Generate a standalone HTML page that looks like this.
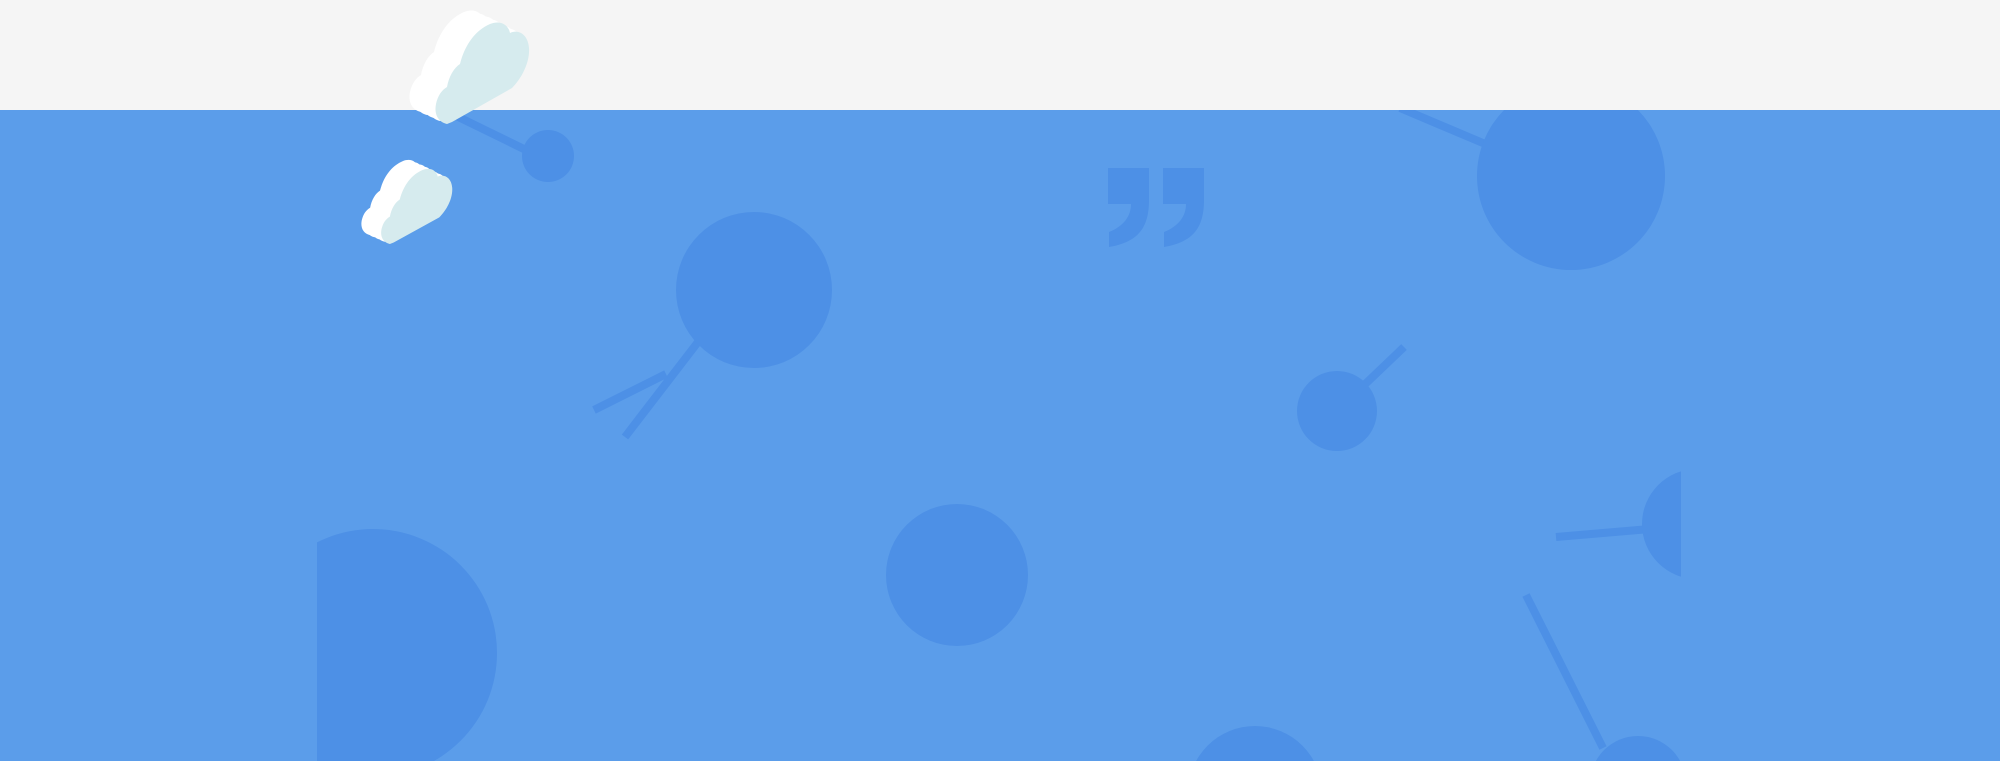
<!DOCTYPE html>
<html><head><meta charset="utf-8"><style>
html,body{margin:0;padding:0;width:2000px;height:761px;overflow:hidden;background:#5b9dea;}
svg{position:absolute;left:0;top:0;display:block}
</style></head><body><svg width="2000" height="761" viewBox="0 0 2000 761" xmlns="http://www.w3.org/2000/svg">
<defs>
<clipPath id="c"><rect x="317" y="110" width="1364" height="651"/></clipPath>
<path id="cf" d="M447,124 C438,122 434,114 436,104 C438,95 442,90 447,87 C449,76 454,68 460,64 C465,44 476,30 490,24 C500,20 508,24 510,33 C518,29 528,34 529,48 C530,62 522,78 512,88 L452,122 Z"/>
</defs>
<rect x="0" y="110" width="2000" height="651" fill="#5b9dea"/>
<g clip-path="url(#c)" fill="#4d90e6" stroke="#4d90e6">
<g fill="none" stroke-width="8">
<line x1="440" y1="108" x2="530" y2="152"/>
<line x1="698" y1="342" x2="625" y2="437"/>
<line x1="666" y1="374" x2="594" y2="410"/>
<line x1="1400" y1="108" x2="1490" y2="146"/>
<line x1="1337" y1="411" x2="1404" y2="347"/>
<line x1="1556" y1="537" x2="1650" y2="529"/>
<line x1="1526" y1="595" x2="1603" y2="748"/>
</g>
<g stroke="none">
<circle cx="548" cy="156" r="26"/>
<circle cx="754" cy="290" r="78"/>
<circle cx="373" cy="653" r="124"/>
<circle cx="957" cy="575" r="71"/>
<circle cx="1571" cy="176" r="94"/>
<circle cx="1337" cy="411" r="40"/>
<circle cx="1697" cy="524" r="55"/>
<circle cx="1255" cy="793" r="67"/>
<circle cx="1638" cy="784" r="48"/>
<path d="M1108,168 H1149 V200 C1149,228 1138,242 1109,247 V232 C1124,226 1131,216 1131,204 H1108 Z"/>
<path transform="translate(55,0)" d="M1108,168 H1149 V200 C1149,228 1138,242 1109,247 V232 C1124,226 1131,216 1131,204 H1108 Z"/>
</g>
</g>
<rect x="0" y="0" width="2000" height="110" fill="#f5f5f5"/>
<g>
<g fill="#ffffff">
<use href="#cf" transform="translate(-26,-12)"/>
<use href="#cf" transform="translate(-20,-9)"/>
<use href="#cf" transform="translate(-13,-6)"/>
<use href="#cf" transform="translate(-7,-3)"/>
</g>
<use href="#cf" fill="#d6ebee"/>
</g>
<g transform="translate(380,167) scale(0.76,0.74) translate(-434,-20)">
<g fill="#ffffff">
<use href="#cf" transform="translate(-26,-12)"/>
<use href="#cf" transform="translate(-20,-9)"/>
<use href="#cf" transform="translate(-13,-6)"/>
<use href="#cf" transform="translate(-7,-3)"/>
</g>
<use href="#cf" fill="#d6ebee"/>
</g>
</svg></body></html>
